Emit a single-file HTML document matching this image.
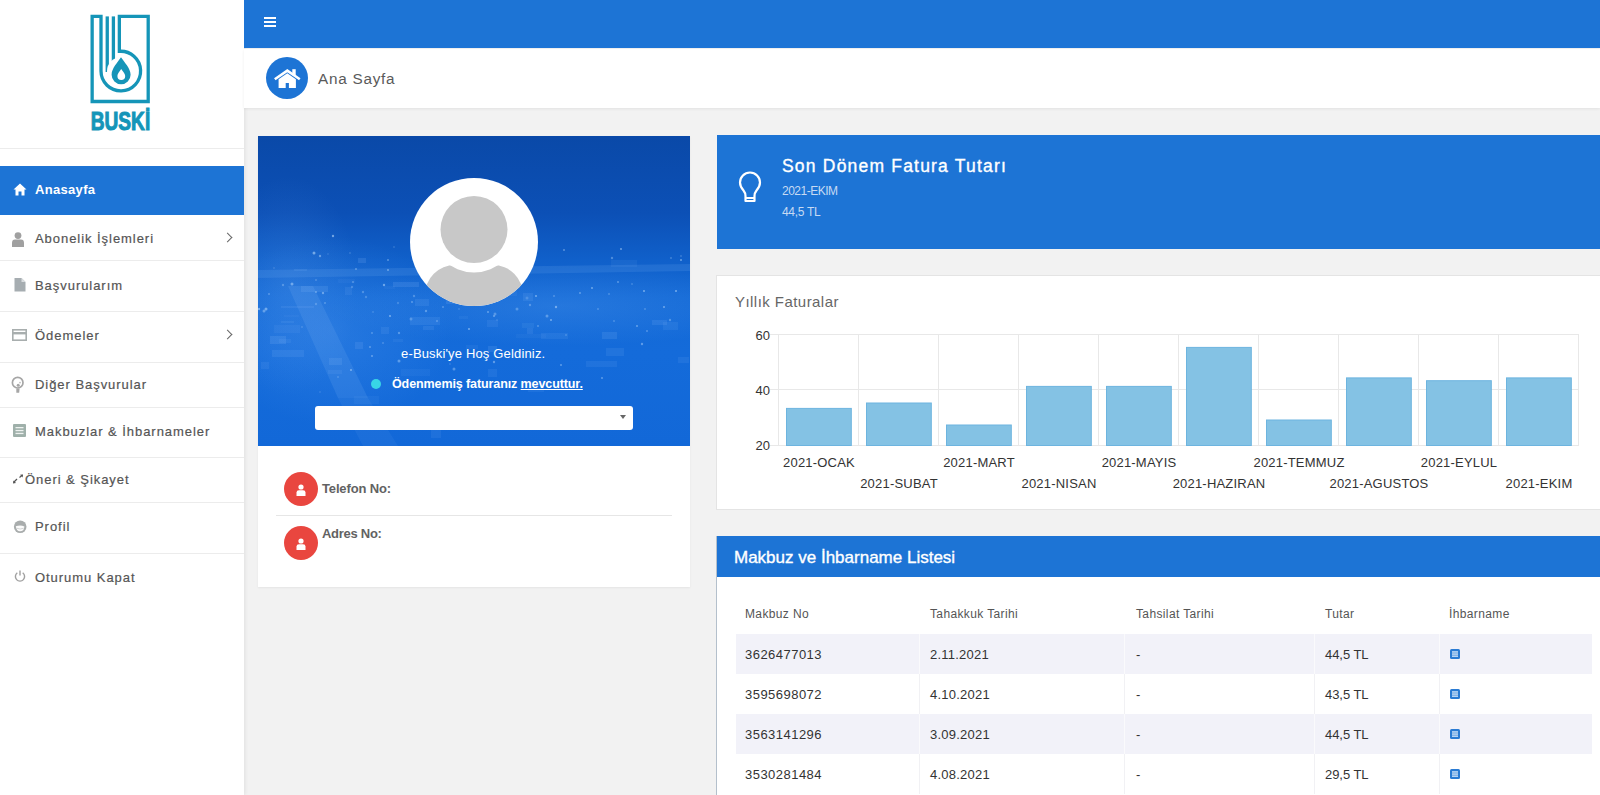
<!DOCTYPE html>
<html><head><meta charset="utf-8">
<style>
*{margin:0;padding:0;box-sizing:border-box}
html,body{width:1600px;height:795px;overflow:hidden}
body{background:#f2f2f2;font-family:"Liberation Sans",sans-serif;position:relative;color:#333}
.abs{position:absolute}
#sidebar{position:absolute;left:0;top:0;width:244px;height:795px;background:#fff;box-shadow:1px 0 4px rgba(0,0,0,.08)}
.sep{position:absolute;left:0;width:244px;height:1px;background:#ececec}
.mi{position:absolute;left:35px;font-size:13px;letter-spacing:0.95px;color:#555;white-space:nowrap;-webkit-text-stroke:0.2px #555}
.chev{position:absolute;left:224px;width:7px;height:7px;border-right:1.3px solid #666;border-top:1.3px solid #666;transform:rotate(45deg)}
#topbar{position:absolute;left:244px;top:0;width:1356px;height:48px;background:#1d74d5}
#crumb{position:absolute;left:244px;top:49px;width:1356px;height:59px;background:#fff;box-shadow:0 1px 3px rgba(0,0,0,.07)}
.card{position:absolute;background:#fff}
.th{position:absolute;top:607px;font-size:12px;color:#555;white-space:nowrap;letter-spacing:0.37px}
.td{position:absolute;font-size:13px;color:#333;white-space:nowrap;letter-spacing:0.47px}
</style></head><body>

<div id="sidebar">
  <svg class="abs" style="left:85px;top:10px" width="70" height="122" viewBox="0 0 70 122">
    <g fill="none" stroke="#1595b8" stroke-width="3.3">
      <path d="M16 6.4 H7.15 V91.5 H63.2 V6.4 H34.35 V41.3 A19.8 19.8 0 1 1 16 61.05 Z" stroke-linejoin="miter"/>
      <path d="M22.25 6.4 V62"/>
      <path d="M28.4 6.4 V62"/>
    </g>
    <circle cx="35.8" cy="61.05" r="13.8" fill="#fff"/>
    <path d="M36 47.2 C33 52 26.6 58 26.6 64.8 A9.5 9.5 0 0 0 45.6 64.8 C45.6 58 39 52 36 47.2 Z" fill="#1595b8"/>
    <path d="M36.2 59 C34.7 61.5 32.4 63.5 32.4 66 A3.9 3.9 0 0 0 40.2 66 C40.2 63.5 37.7 61.5 36.2 59 Z" fill="#fff"/>
    <text x="5.8" y="120.2" font-family="Liberation Sans" font-weight="bold" font-size="26" textLength="59.4" lengthAdjust="spacingAndGlyphs" fill="#1595b8" stroke="#1595b8" stroke-width="1.1">BUSKİ</text>
  </svg>
  <div class="sep" style="top:148px"></div>
  <div class="abs" style="left:0;top:166px;width:244px;height:49px;background:#1d74d5"></div>
  <svg class="abs" style="left:13px;top:183px" width="14" height="13" viewBox="0 0 14 13"><path d="M7 0.5 L0.5 6.5 H2.5 V12.5 H5.5 V8.5 H8.5 V12.5 H11.5 V6.5 H13.5 Z" fill="#fff"/></svg>
  <div class="mi" style="top:182px;color:#fff;font-weight:bold;letter-spacing:0.32px;-webkit-text-stroke:0">Anasayfa</div>

  <svg class="abs" style="left:12px;top:232px" width="12" height="15" viewBox="0 0 12 15"><circle cx="6" cy="3.6" r="3.4" fill="#a0a0a0"/><path d="M0 15 V11 Q0 7.6 3 7.6 H9 Q12 7.6 12 11 V15 Z" fill="#a0a0a0"/></svg>
  <div class="mi" style="top:231px">Abonelik İşlemleri</div>
  <div class="chev" style="top:234px"></div>
  <div class="sep" style="top:260px"></div>

  <svg class="abs" style="left:14px;top:278px" width="12" height="14" viewBox="0 0 12 14"><path d="M0.5 0 H7.5 L11.5 4 V13.5 H0.5 Z" fill="#a6adb1"/><path d="M7.5 0 V4 H11.5" fill="#d9dde0"/></svg>
  <div class="mi" style="top:278px">Başvurularım</div>
  <div class="sep" style="top:311px"></div>

  <svg class="abs" style="left:12px;top:329px" width="15" height="12" viewBox="0 0 15 12"><rect x="0.8" y="0.8" width="13.4" height="10.4" fill="none" stroke="#a8aeae" stroke-width="1.6"/><rect x="0.8" y="3" width="13.4" height="2.4" fill="#a8aeae"/></svg>
  <div class="mi" style="top:328px">Ödemeler</div>
  <div class="chev" style="top:331px"></div>
  <div class="sep" style="top:362px"></div>

  <svg class="abs" style="left:10px;top:375px" width="16" height="19" viewBox="0 0 16 19"><circle cx="7.7" cy="7.7" r="5.3" fill="none" stroke="#a6a6a6" stroke-width="1.7"/><circle cx="8.2" cy="10.2" r="1.5" fill="#a6a6a6"/><circle cx="10" cy="7.6" r="0.9" fill="#bdbdbd"/><path d="M6.3 13.5 H9.6 L9.2 17.8 H6.3 Z" fill="#a6a6a6"/></svg>
  <div class="mi" style="top:377px">Diğer Başvurular</div>
  <div class="sep" style="top:407px"></div>

  <svg class="abs" style="left:13px;top:424px" width="13" height="13" viewBox="0 0 13 13"><rect x="0" y="0" width="13" height="13" rx="1" fill="#9fb0aa"/><rect x="2.5" y="3" width="8" height="1.3" fill="#eef2f0"/><rect x="2.5" y="5.9" width="8" height="1.3" fill="#eef2f0"/><rect x="2.5" y="8.8" width="8" height="1.3" fill="#eef2f0"/></svg>
  <div class="mi" style="top:424px">Makbuzlar &amp; İhbarnameler</div>
  <div class="sep" style="top:457px"></div>

  <svg class="abs" style="left:12px;top:474px" width="12" height="10" viewBox="0 0 12 10"><path d="M1.5 8.5 L5 5" stroke="#555" stroke-width="1.2"/><path d="M1 9.5 L1.5 6.5 L4 9 Z" fill="#555"/><path d="M7.5 3.5 L10.5 1" stroke="#555" stroke-width="1.2"/><path d="M11 0.5 L8 0.8 L10.6 3.4 Z" fill="#555"/></svg>
  <div class="mi" style="top:472px;left:25px">Öneri &amp; Şikayet</div>
  <div class="sep" style="top:502px"></div>

  <svg class="abs" style="left:13px;top:520px" width="14" height="14" viewBox="0 0 14 14"><circle cx="7.2" cy="6.8" r="6.3" fill="#a9adad"/><path d="M2.8 6.2 Q7.5 4.6 11.4 6.4 Q11 11.2 7 11.3 Q3.4 11.2 2.8 6.2 Z" fill="#fbfbfb"/><path d="M3.5 8.2 Q7.2 9.8 10.8 8.2" stroke="#c9cccc" stroke-width="0.8" fill="none"/></svg>
  <div class="mi" style="top:519px">Profil</div>
  <div class="sep" style="top:553px"></div>

  <svg class="abs" style="left:14px;top:570px" width="12" height="12" viewBox="0 0 12 12"><path d="M3.3 2.8 A4.6 4.6 0 1 0 8.7 2.8" fill="none" stroke="#a0a0a0" stroke-width="1.4"/><path d="M6 0.5 V5.5" stroke="#a0a0a0" stroke-width="1.4"/></svg>
  <div class="mi" style="top:570px">Oturumu Kapat</div>
</div>

<div id="topbar"></div>
<div class="abs" style="left:264px;top:17px;width:12px;height:2px;background:#fff"></div>
<div class="abs" style="left:264px;top:21px;width:12px;height:2px;background:#fff"></div>
<div class="abs" style="left:264px;top:25px;width:12px;height:2px;background:#fff"></div>
<div id="crumb"></div>
<div class="abs" style="left:266px;top:57px;width:42px;height:42px;border-radius:50%;background:#1d74d5"></div>
<svg class="abs" style="left:270px;top:62px" width="35" height="32" viewBox="0 0 35 32"><path d="M4.8 17.2 L17.3 8.6 L29.8 17.2" stroke="#fff" stroke-width="2.6" fill="none" stroke-linejoin="miter"/><rect x="22.3" y="7.2" width="3.4" height="6" fill="#fff"/><path d="M8.6 17.2 L17.3 11.2 L25.9 17.2 V26 H18.9 V21 H15.7 V26 H8.6 Z" fill="#fff"/></svg>
<div class="abs" style="left:318px;top:70px;font-size:15.3px;color:#5a5a5a;letter-spacing:0.75px;white-space:nowrap">Ana Sayfa</div>

<!-- profile card -->
<div class="card" style="left:258px;top:136px;width:432px;height:451px;box-shadow:0 1px 2px rgba(0,0,0,.06)"></div>
<div class="abs" id="pbg" style="left:258px;top:136px;width:432px;height:310px;overflow:hidden;background:
radial-gradient(ellipse 120px 95px at 75px 195px, rgba(110,175,250,.2), rgba(110,175,250,0) 100%),
radial-gradient(ellipse 230px 40px at 300px 170px, rgba(110,175,248,.2), rgba(110,175,248,0) 100%),
radial-gradient(ellipse 70px 110px at 30px 150px, rgba(110,170,245,.18), rgba(110,170,245,0) 100%),
linear-gradient(180deg,#0a49a8 0%,#0c50b6 25%,#1060ca 40%,#1369d6 52%,#146bda 70%,#1268d8 100%)">
<svg width="432" height="310" style="position:absolute;left:0;top:0">
<path d="M30 150 L55 150 L110 262 L80 262 Z" fill="#8cc0f8" fill-opacity="0.14"/>
<path d="M80 262 L110 262 L140 310 L105 310 Z" fill="#8cc0f8" fill-opacity="0.08"/>
<path d="M0 134 L432 128 L432 135 L0 142 Z" fill="#7ab4f4" fill-opacity="0.16"/>
<circle cx="269" cy="162" r="1.5" fill="#c4e2ff" fill-opacity="0.21"/>
<circle cx="201" cy="103" r="1" fill="#c4e2ff" fill-opacity="0.43"/>
<circle cx="389" cy="195" r="1" fill="#c4e2ff" fill-opacity="0.33"/>
<circle cx="44" cy="191" r="1" fill="#c4e2ff" fill-opacity="0.20"/>
<circle cx="94" cy="151" r="1.2" fill="#c4e2ff" fill-opacity="0.26"/>
<circle cx="344" cy="242" r="1" fill="#c4e2ff" fill-opacity="0.42"/>
<circle cx="192" cy="228" r="0.8" fill="#c4e2ff" fill-opacity="0.27"/>
<circle cx="93" cy="234" r="1" fill="#c4e2ff" fill-opacity="0.51"/>
<circle cx="125" cy="207" r="1" fill="#c4e2ff" fill-opacity="0.26"/>
<circle cx="418" cy="155" r="1" fill="#c4e2ff" fill-opacity="0.54"/>
<circle cx="386" cy="155" r="1" fill="#c4e2ff" fill-opacity="0.53"/>
<circle cx="114" cy="197" r="1" fill="#c4e2ff" fill-opacity="0.31"/>
<circle cx="261" cy="218" r="1" fill="#c4e2ff" fill-opacity="0.22"/>
<circle cx="154" cy="166" r="1" fill="#c4e2ff" fill-opacity="0.37"/>
<circle cx="136" cy="111" r="0.8" fill="#c4e2ff" fill-opacity="0.29"/>
<circle cx="406" cy="171" r="1" fill="#c4e2ff" fill-opacity="0.50"/>
<circle cx="8" cy="173" r="1.5" fill="#c4e2ff" fill-opacity="0.49"/>
<circle cx="196" cy="133" r="1" fill="#c4e2ff" fill-opacity="0.42"/>
<circle cx="412" cy="184" r="1.2" fill="#c4e2ff" fill-opacity="0.32"/>
<circle cx="153" cy="183" r="1.5" fill="#c4e2ff" fill-opacity="0.29"/>
<circle cx="200" cy="113" r="1" fill="#c4e2ff" fill-opacity="0.50"/>
<circle cx="16" cy="132" r="0.8" fill="#c4e2ff" fill-opacity="0.27"/>
<circle cx="222" cy="152" r="1" fill="#c4e2ff" fill-opacity="0.52"/>
<circle cx="236" cy="180" r="1" fill="#c4e2ff" fill-opacity="0.44"/>
<circle cx="132" cy="180" r="1" fill="#c4e2ff" fill-opacity="0.55"/>
<circle cx="70" cy="118" r="0.8" fill="#c4e2ff" fill-opacity="0.23"/>
<circle cx="259" cy="173" r="1.5" fill="#c4e2ff" fill-opacity="0.32"/>
<circle cx="108" cy="161" r="1.2" fill="#c4e2ff" fill-opacity="0.25"/>
<circle cx="423" cy="124" r="1" fill="#c4e2ff" fill-opacity="0.49"/>
<circle cx="56" cy="117" r="1.5" fill="#c4e2ff" fill-opacity="0.53"/>
<circle cx="272" cy="169" r="1.2" fill="#c4e2ff" fill-opacity="0.33"/>
<circle cx="25" cy="149" r="1.2" fill="#c4e2ff" fill-opacity="0.30"/>
<circle cx="196" cy="233" r="1.5" fill="#c4e2ff" fill-opacity="0.36"/>
<circle cx="211" cy="165" r="1" fill="#c4e2ff" fill-opacity="0.37"/>
<circle cx="126" cy="149" r="1.2" fill="#c4e2ff" fill-opacity="0.49"/>
<circle cx="230" cy="176" r="1" fill="#c4e2ff" fill-opacity="0.42"/>
<circle cx="216" cy="157" r="1" fill="#c4e2ff" fill-opacity="0.38"/>
<circle cx="237" cy="178" r="1.5" fill="#c4e2ff" fill-opacity="0.33"/>
<circle cx="340" cy="173" r="0.8" fill="#c4e2ff" fill-opacity="0.47"/>
<circle cx="157" cy="112" r="1" fill="#c4e2ff" fill-opacity="0.49"/>
<circle cx="114" cy="220" r="1" fill="#c4e2ff" fill-opacity="0.43"/>
<circle cx="251" cy="158" r="0.8" fill="#c4e2ff" fill-opacity="0.37"/>
<circle cx="334" cy="152" r="1" fill="#c4e2ff" fill-opacity="0.49"/>
<circle cx="280" cy="190" r="1" fill="#c4e2ff" fill-opacity="0.32"/>
<circle cx="278" cy="160" r="1" fill="#c4e2ff" fill-opacity="0.52"/>
<circle cx="75" cy="100" r="1.2" fill="#c4e2ff" fill-opacity="0.54"/>
<circle cx="413" cy="122" r="1" fill="#c4e2ff" fill-opacity="0.27"/>
<circle cx="156" cy="160" r="1.2" fill="#c4e2ff" fill-opacity="0.30"/>
<circle cx="34" cy="148" r="1.5" fill="#c4e2ff" fill-opacity="0.47"/>
<circle cx="251" cy="133" r="1.2" fill="#c4e2ff" fill-opacity="0.31"/>
<circle cx="239" cy="184" r="0.8" fill="#c4e2ff" fill-opacity="0.27"/>
<circle cx="253" cy="144" r="1.5" fill="#c4e2ff" fill-opacity="0.43"/>
<circle cx="95" cy="146" r="0.8" fill="#c4e2ff" fill-opacity="0.55"/>
<circle cx="423" cy="120" r="1" fill="#c4e2ff" fill-opacity="0.22"/>
<circle cx="58" cy="156" r="1" fill="#c4e2ff" fill-opacity="0.39"/>
<circle cx="179" cy="185" r="1" fill="#c4e2ff" fill-opacity="0.33"/>
<circle cx="264" cy="143" r="1" fill="#c4e2ff" fill-opacity="0.20"/>
<circle cx="175" cy="151" r="1" fill="#c4e2ff" fill-opacity="0.50"/>
<circle cx="374" cy="148" r="0.8" fill="#c4e2ff" fill-opacity="0.39"/>
<circle cx="130" cy="124" r="1" fill="#c4e2ff" fill-opacity="0.39"/>
<circle cx="354" cy="122" r="1.2" fill="#c4e2ff" fill-opacity="0.34"/>
<circle cx="244" cy="127" r="1" fill="#c4e2ff" fill-opacity="0.41"/>
<circle cx="244" cy="156" r="1" fill="#c4e2ff" fill-opacity="0.54"/>
<circle cx="263" cy="121" r="0.8" fill="#c4e2ff" fill-opacity="0.33"/>
<circle cx="141" cy="225" r="1.5" fill="#c4e2ff" fill-opacity="0.39"/>
<circle cx="141" cy="197" r="1.2" fill="#c4e2ff" fill-opacity="0.35"/>
<circle cx="98" cy="133" r="1" fill="#c4e2ff" fill-opacity="0.37"/>
<circle cx="306" cy="114" r="1" fill="#c4e2ff" fill-opacity="0.41"/>
<circle cx="112" cy="211" r="1" fill="#c4e2ff" fill-opacity="0.37"/>
<circle cx="179" cy="123" r="1.2" fill="#c4e2ff" fill-opacity="0.53"/>
<circle cx="62" cy="256" r="0.8" fill="#c4e2ff" fill-opacity="0.24"/>
<circle cx="269" cy="138" r="1" fill="#c4e2ff" fill-opacity="0.49"/>
<circle cx="6" cy="175" r="1.5" fill="#c4e2ff" fill-opacity="0.40"/>
<circle cx="105" cy="156" r="1.2" fill="#c4e2ff" fill-opacity="0.29"/>
<circle cx="67" cy="167" r="1" fill="#c4e2ff" fill-opacity="0.30"/>
<circle cx="263" cy="115" r="1.5" fill="#c4e2ff" fill-opacity="0.51"/>
<circle cx="387" cy="173" r="0.8" fill="#c4e2ff" fill-opacity="0.47"/>
<circle cx="130" cy="134" r="1" fill="#c4e2ff" fill-opacity="0.46"/>
<circle cx="11" cy="158" r="1" fill="#c4e2ff" fill-opacity="0.33"/>
<circle cx="322" cy="157" r="1" fill="#c4e2ff" fill-opacity="0.39"/>
<circle cx="296" cy="160" r="0.8" fill="#c4e2ff" fill-opacity="0.51"/>
<circle cx="236" cy="226" r="1.2" fill="#c4e2ff" fill-opacity="0.41"/>
<circle cx="298" cy="171" r="1.2" fill="#c4e2ff" fill-opacity="0.50"/>
<circle cx="363" cy="113" r="1" fill="#c4e2ff" fill-opacity="0.51"/>
<circle cx="201" cy="173" r="0.8" fill="#c4e2ff" fill-opacity="0.31"/>
<circle cx="1" cy="173" r="1.2" fill="#c4e2ff" fill-opacity="0.52"/>
<circle cx="62" cy="120" r="1.2" fill="#c4e2ff" fill-opacity="0.44"/>
<circle cx="384" cy="208" r="1.2" fill="#c4e2ff" fill-opacity="0.41"/>
<circle cx="351" cy="158" r="0.8" fill="#c4e2ff" fill-opacity="0.46"/>
<circle cx="115" cy="176" r="0.8" fill="#c4e2ff" fill-opacity="0.32"/>
<circle cx="185" cy="171" r="0.8" fill="#c4e2ff" fill-opacity="0.55"/>
<circle cx="303" cy="229" r="1" fill="#c4e2ff" fill-opacity="0.42"/>
<circle cx="356" cy="185" r="0.8" fill="#c4e2ff" fill-opacity="0.45"/>
<circle cx="58" cy="144" r="1" fill="#c4e2ff" fill-opacity="0.26"/>
<circle cx="80" cy="241" r="1" fill="#c4e2ff" fill-opacity="0.22"/>
<circle cx="92" cy="117" r="0.8" fill="#c4e2ff" fill-opacity="0.30"/>
<circle cx="247" cy="147" r="0.8" fill="#c4e2ff" fill-opacity="0.46"/>
<circle cx="379" cy="190" r="1" fill="#c4e2ff" fill-opacity="0.44"/>
<circle cx="211" cy="193" r="1" fill="#c4e2ff" fill-opacity="0.53"/>
<circle cx="162" cy="216" r="1" fill="#c4e2ff" fill-opacity="0.40"/>
<circle cx="293" cy="184" r="1" fill="#c4e2ff" fill-opacity="0.52"/>
<circle cx="240" cy="145" r="1.5" fill="#c4e2ff" fill-opacity="0.28"/>
<circle cx="360" cy="146" r="1" fill="#c4e2ff" fill-opacity="0.38"/>
<circle cx="58" cy="168" r="1.2" fill="#c4e2ff" fill-opacity="0.26"/>
<circle cx="308" cy="199" r="1" fill="#c4e2ff" fill-opacity="0.23"/>
<circle cx="289" cy="180" r="1.5" fill="#c4e2ff" fill-opacity="0.36"/>
<circle cx="168" cy="175" r="1.2" fill="#c4e2ff" fill-opacity="0.37"/>
<circle cx="140" cy="167" r="1.2" fill="#c4e2ff" fill-opacity="0.22"/>
<circle cx="65" cy="157" r="1.2" fill="#c4e2ff" fill-opacity="0.44"/>
<rect x="96" y="260" width="25" height="8" fill="#9cc8ff" fill-opacity="0.06"/>
<rect x="270" y="252" width="16" height="4" fill="#9cc8ff" fill-opacity="0.08"/>
<rect x="265" y="157" width="10" height="8" fill="#9cc8ff" fill-opacity="0.11"/>
<rect x="348" y="212" width="18" height="8" fill="#9cc8ff" fill-opacity="0.10"/>
<rect x="256" y="121" width="17" height="3" fill="#9cc8ff" fill-opacity="0.05"/>
<rect x="87" y="151" width="7" height="8" fill="#9cc8ff" fill-opacity="0.09"/>
<rect x="328" y="225" width="31" height="6" fill="#9cc8ff" fill-opacity="0.09"/>
<rect x="201" y="180" width="9" height="3" fill="#9cc8ff" fill-opacity="0.06"/>
<rect x="162" y="118" width="10" height="4" fill="#9cc8ff" fill-opacity="0.07"/>
<rect x="70" y="234" width="14" height="4" fill="#9cc8ff" fill-opacity="0.09"/>
<rect x="14" y="214" width="32" height="7" fill="#9cc8ff" fill-opacity="0.11"/>
<rect x="204" y="162" width="32" height="3" fill="#9cc8ff" fill-opacity="0.11"/>
<rect x="126" y="150" width="11" height="3" fill="#9cc8ff" fill-opacity="0.05"/>
<rect x="100" y="122" width="8" height="5" fill="#9cc8ff" fill-opacity="0.14"/>
<rect x="157" y="163" width="14" height="7" fill="#9cc8ff" fill-opacity="0.11"/>
<rect x="71" y="222" width="13" height="7" fill="#9cc8ff" fill-opacity="0.13"/>
<rect x="3" y="226" width="8" height="7" fill="#9cc8ff" fill-opacity="0.09"/>
<rect x="224" y="144" width="16" height="3" fill="#9cc8ff" fill-opacity="0.06"/>
<rect x="23" y="185" width="13" height="2" fill="#9cc8ff" fill-opacity="0.09"/>
<rect x="26" y="179" width="15" height="2" fill="#9cc8ff" fill-opacity="0.05"/>
<rect x="420" y="221" width="11" height="6" fill="#9cc8ff" fill-opacity="0.09"/>
<rect x="230" y="210" width="9" height="6" fill="#9cc8ff" fill-opacity="0.13"/>
<rect x="258" y="198" width="30" height="4" fill="#9cc8ff" fill-opacity="0.05"/>
<rect x="233" y="128" width="17" height="6" fill="#9cc8ff" fill-opacity="0.12"/>
<rect x="394" y="184" width="15" height="5" fill="#9cc8ff" fill-opacity="0.12"/>
<rect x="97" y="206" width="8" height="7" fill="#9cc8ff" fill-opacity="0.12"/>
<rect x="135" y="203" width="10" height="3" fill="#9cc8ff" fill-opacity="0.07"/>
<rect x="36" y="133" width="13" height="2" fill="#9cc8ff" fill-opacity="0.11"/>
<rect x="21" y="203" width="12" height="4" fill="#9cc8ff" fill-opacity="0.08"/>
<rect x="43" y="150" width="27" height="6" fill="#9cc8ff" fill-opacity="0.13"/>
<rect x="283" y="197" width="27" height="6" fill="#9cc8ff" fill-opacity="0.09"/>
<rect x="353" y="124" width="26" height="7" fill="#9cc8ff" fill-opacity="0.07"/>
<rect x="165" y="190" width="11" height="4" fill="#9cc8ff" fill-opacity="0.11"/>
<rect x="123" y="191" width="8" height="7" fill="#9cc8ff" fill-opacity="0.10"/>
<rect x="12" y="200" width="16" height="8" fill="#9cc8ff" fill-opacity="0.14"/>
<rect x="264" y="187" width="12" height="5" fill="#9cc8ff" fill-opacity="0.08"/>
<rect x="143" y="233" width="29" height="7" fill="#9cc8ff" fill-opacity="0.06"/>
<rect x="229" y="184" width="11" height="7" fill="#9cc8ff" fill-opacity="0.09"/>
<rect x="405" y="186" width="15" height="8" fill="#9cc8ff" fill-opacity="0.09"/>
<rect x="188" y="161" width="18" height="7" fill="#9cc8ff" fill-opacity="0.13"/>
<rect x="230" y="233" width="9" height="8" fill="#9cc8ff" fill-opacity="0.09"/>
<rect x="23" y="170" width="33" height="2" fill="#9cc8ff" fill-opacity="0.10"/>
<rect x="208" y="209" width="12" height="4" fill="#9cc8ff" fill-opacity="0.07"/>
<rect x="243" y="153" width="16" height="7" fill="#9cc8ff" fill-opacity="0.07"/>
<rect x="152" y="181" width="30" height="8" fill="#9cc8ff" fill-opacity="0.11"/>
<rect x="173" y="294" width="10" height="8" fill="#9cc8ff" fill-opacity="0.09"/>
<rect x="16" y="189" width="26" height="8" fill="#9cc8ff" fill-opacity="0.07"/>
<rect x="344" y="196" width="15" height="7" fill="#9cc8ff" fill-opacity="0.13"/>
<rect x="269" y="192" width="6" height="6" fill="#9cc8ff" fill-opacity="0.10"/>
<rect x="80" y="143" width="17" height="4" fill="#9cc8ff" fill-opacity="0.05"/>
<rect x="135" y="146" width="26" height="5" fill="#9cc8ff" fill-opacity="0.14"/>
</svg></div>
<svg class="abs" style="left:410px;top:178px" width="128" height="128" viewBox="0 0 128 128"><defs><clipPath id="av"><circle cx="64" cy="64" r="64"/></clipPath></defs><circle cx="64" cy="64" r="64" fill="#fff"/><g clip-path="url(#av)"><rect x="15" y="87" width="98" height="60" rx="30" fill="#c8c8c8"/><circle cx="64" cy="51.5" r="43" fill="#fff"/><circle cx="64" cy="51.5" r="33.5" fill="#c8c8c8"/></g></svg>
<div class="abs" style="left:401px;top:346px;font-size:13px;color:#fff;white-space:nowrap;letter-spacing:0.16px">e-Buski'ye Hoş Geldiniz.</div>
<div class="abs" style="left:371px;top:379px;width:10px;height:10px;border-radius:50%;background:#38d6e6"></div>
<div class="abs" style="left:392px;top:375px;font-size:13px;color:#fff;white-space:nowrap;font-weight:bold;letter-spacing:-0.1px;font-size:12.5px;margin-top:1.5px">Ödenmemiş faturanız <span style="text-decoration:underline">mevcuttur.</span></div>
<div class="abs" style="left:315px;top:406px;width:318px;height:24px;background:#fff;border-radius:3px"></div>
<div class="abs" style="left:620px;top:415px;width:0;height:0;border-left:3.5px solid transparent;border-right:3.5px solid transparent;border-top:4px solid #666"></div>

<div class="abs" style="left:284px;top:472px;width:34px;height:34px;border-radius:50%;background:#e9463f"></div>
<svg class="abs" style="left:296px;top:484px" width="10" height="12" viewBox="0 0 10 12"><circle cx="5" cy="3" r="2.6" fill="#fff"/><path d="M0.5 12 V8.5 Q0.5 6.2 3 6.2 H7 Q9.5 6.2 9.5 8.5 V12 Z" fill="#fff"/></svg>
<div class="abs" style="left:322px;top:481px;font-size:13px;font-weight:bold;color:#626262;white-space:nowrap;letter-spacing:-0.15px">Telefon No:</div>
<div class="abs" style="left:276px;top:515px;width:396px;height:1px;background:#e6e6e6"></div>
<div class="abs" style="left:284px;top:526px;width:34px;height:34px;border-radius:50%;background:#e9463f"></div>
<svg class="abs" style="left:296px;top:538px" width="10" height="12" viewBox="0 0 10 12"><circle cx="5" cy="3" r="2.6" fill="#fff"/><path d="M0.5 12 V8.5 Q0.5 6.2 3 6.2 H7 Q9.5 6.2 9.5 8.5 V12 Z" fill="#fff"/></svg>
<div class="abs" style="left:322px;top:526px;font-size:13px;font-weight:bold;color:#626262;white-space:nowrap;letter-spacing:-0.28px">Adres No:</div>

<!-- son donem -->
<div class="abs" style="left:717px;top:135px;width:883px;height:114px;background:#1d74d5"></div>
<svg class="abs" style="left:737px;top:170px" width="26" height="36" viewBox="0 0 26 36"><path d="M8.5 31 V26 Q8.5 23 6.5 20.5 Q3 16.5 3 12.5 A10 10 0 0 1 23 12.5 Q23 16.5 19.5 20.5 Q17.5 23 17.5 26 V31 Z" fill="none" stroke="#fff" stroke-width="2.2" stroke-linejoin="round"/><path d="M9 28 H17" stroke="#fff" stroke-width="2"/></svg>
<div class="abs" style="left:782px;top:156px;font-size:17.5px;color:#fff;white-space:nowrap;letter-spacing:1.2px;-webkit-text-stroke:0.35px #fff">Son Dönem Fatura Tutarı</div>
<div class="abs" style="left:782px;top:184px;font-size:12px;color:#c6daf3;white-space:nowrap;letter-spacing:-0.5px">2021-EKIM</div>
<div class="abs" style="left:782px;top:205px;font-size:12px;color:#c6daf3;white-space:nowrap;letter-spacing:-0.3px">44,5 TL</div>

<!-- chart card -->
<div class="card" style="left:716px;top:275px;width:900px;height:235px;border:1px solid #e4e4e4"></div>
<div class="abs" style="left:735px;top:293px;font-size:15px;color:#666;white-space:nowrap;letter-spacing:0.45px">Yıllık Faturalar</div>
<svg class="abs" style="left:716px;top:275px" width="884" height="235" viewBox="716 275 884 235" id="chart">
<line x1="778.5" y1="334" x2="778.5" y2="446" stroke="#e8e8e8" stroke-width="1"/>
<line x1="858.5" y1="334" x2="858.5" y2="446" stroke="#e8e8e8" stroke-width="1"/>
<line x1="938.5" y1="334" x2="938.5" y2="446" stroke="#e8e8e8" stroke-width="1"/>
<line x1="1018.5" y1="334" x2="1018.5" y2="446" stroke="#e8e8e8" stroke-width="1"/>
<line x1="1098.5" y1="334" x2="1098.5" y2="446" stroke="#e8e8e8" stroke-width="1"/>
<line x1="1178.5" y1="334" x2="1178.5" y2="446" stroke="#e8e8e8" stroke-width="1"/>
<line x1="1258.5" y1="334" x2="1258.5" y2="446" stroke="#e8e8e8" stroke-width="1"/>
<line x1="1338.5" y1="334" x2="1338.5" y2="446" stroke="#e8e8e8" stroke-width="1"/>
<line x1="1418.5" y1="334" x2="1418.5" y2="446" stroke="#e8e8e8" stroke-width="1"/>
<line x1="1498.5" y1="334" x2="1498.5" y2="446" stroke="#e8e8e8" stroke-width="1"/>
<line x1="1578.5" y1="334" x2="1578.5" y2="446" stroke="#e8e8e8" stroke-width="1"/>
<line x1="770" y1="334.5" x2="1578" y2="334.5" stroke="#e8e8e8" stroke-width="1"/>
<line x1="770" y1="389.5" x2="1578" y2="389.5" stroke="#e8e8e8" stroke-width="1"/>
<line x1="770" y1="445.5" x2="1578" y2="445.5" stroke="#e8e8e8" stroke-width="1"/>
<rect x="786.5" y="408.4" width="64.8" height="37.1" fill="#84c2e4" stroke="#6db4df" stroke-width="1"/>
<rect x="866.5" y="403" width="64.8" height="42.5" fill="#84c2e4" stroke="#6db4df" stroke-width="1"/>
<rect x="946.5" y="425" width="64.8" height="20.5" fill="#84c2e4" stroke="#6db4df" stroke-width="1"/>
<rect x="1026.5" y="386.4" width="64.8" height="59.1" fill="#84c2e4" stroke="#6db4df" stroke-width="1"/>
<rect x="1106.5" y="386.4" width="64.8" height="59.1" fill="#84c2e4" stroke="#6db4df" stroke-width="1"/>
<rect x="1186.5" y="347.4" width="64.8" height="98.1" fill="#84c2e4" stroke="#6db4df" stroke-width="1"/>
<rect x="1266.5" y="420" width="64.8" height="25.5" fill="#84c2e4" stroke="#6db4df" stroke-width="1"/>
<rect x="1346.5" y="377.9" width="64.8" height="67.6" fill="#84c2e4" stroke="#6db4df" stroke-width="1"/>
<rect x="1426.5" y="380.7" width="64.8" height="64.8" fill="#84c2e4" stroke="#6db4df" stroke-width="1"/>
<rect x="1506.5" y="377.9" width="64.8" height="67.6" fill="#84c2e4" stroke="#6db4df" stroke-width="1"/>
<text x="770" y="339.8" text-anchor="end" font-family="Liberation Sans" font-size="13" fill="#333">60</text>
<text x="770" y="394.8" text-anchor="end" font-family="Liberation Sans" font-size="13" fill="#333">40</text>
<text x="770" y="449.9" text-anchor="end" font-family="Liberation Sans" font-size="13" fill="#333">20</text>
<text x="819" y="466.6" text-anchor="middle" font-family="Liberation Sans" font-size="13" fill="#333" letter-spacing="0.2">2021-OCAK</text>
<text x="899" y="488.3" text-anchor="middle" font-family="Liberation Sans" font-size="13" fill="#333" letter-spacing="0.2">2021-SUBAT</text>
<text x="979" y="466.6" text-anchor="middle" font-family="Liberation Sans" font-size="13" fill="#333" letter-spacing="0.2">2021-MART</text>
<text x="1059" y="488.3" text-anchor="middle" font-family="Liberation Sans" font-size="13" fill="#333" letter-spacing="0.2">2021-NISAN</text>
<text x="1139" y="466.6" text-anchor="middle" font-family="Liberation Sans" font-size="13" fill="#333" letter-spacing="0.2">2021-MAYIS</text>
<text x="1219" y="488.3" text-anchor="middle" font-family="Liberation Sans" font-size="13" fill="#333" letter-spacing="0.2">2021-HAZIRAN</text>
<text x="1299" y="466.6" text-anchor="middle" font-family="Liberation Sans" font-size="13" fill="#333" letter-spacing="0.2">2021-TEMMUZ</text>
<text x="1379" y="488.3" text-anchor="middle" font-family="Liberation Sans" font-size="13" fill="#333" letter-spacing="0.2">2021-AGUSTOS</text>
<text x="1459" y="466.6" text-anchor="middle" font-family="Liberation Sans" font-size="13" fill="#333" letter-spacing="0.2">2021-EYLUL</text>
<text x="1539" y="488.3" text-anchor="middle" font-family="Liberation Sans" font-size="13" fill="#333" letter-spacing="0.2">2021-EKIM</text>
</svg>

<!-- table card -->
<div class="card" style="left:716px;top:536px;width:884px;height:259px;border-left:1px solid #b4c0cc"></div>
<div class="abs" style="left:717px;top:536px;width:883px;height:41px;background:#1d74d5"></div>
<div class="abs" style="left:734px;top:548px;font-size:17px;color:#fff;white-space:nowrap;-webkit-text-stroke:0.35px #fff">Makbuz ve İhbarname Listesi</div>
<div class="th" style="left:745px">Makbuz No</div>
<div class="th" style="left:930px">Tahakkuk Tarihi</div>
<div class="th" style="left:1136px">Tahsilat Tarihi</div>
<div class="th" style="left:1325px">Tutar</div>
<div class="th" style="left:1449px">İhbarname</div>
<div class="abs" style="left:736px;top:634px;width:856px;height:40px;background:#f2f2f9"></div>
<div class="abs" style="left:919px;top:634px;width:1px;height:40px;background:#fafafc"></div>
<div class="abs" style="left:1124px;top:634px;width:1px;height:40px;background:#fafafc"></div>
<div class="abs" style="left:1314px;top:634px;width:1px;height:40px;background:#fafafc"></div>
<div class="abs" style="left:1439px;top:634px;width:1px;height:40px;background:#fafafc"></div>
<div class="td" style="left:745px;top:647px">3626477013</div>
<div class="td" style="left:930px;top:647px;letter-spacing:0.23px">2.11.2021</div>
<div class="td" style="left:1136px;top:647px">-</div>
<div class="td" style="left:1325px;top:647px;letter-spacing:-0.05px">44,5 TL</div>
<svg class="abs" style="left:1450px;top:649px" width="10" height="10" viewBox="0 0 10 10"><rect width="10" height="10" rx="1.5" fill="#2a7bd3"/><rect x="2" y="2.3" width="6" height="1.3" fill="#dcecfb"/><rect x="2" y="4.4" width="6" height="1.3" fill="#dcecfb"/><rect x="2" y="6.5" width="6" height="1.3" fill="#dcecfb"/></svg>
<div class="abs" style="left:919px;top:674px;width:1px;height:40px;background:#f1f1f4"></div>
<div class="abs" style="left:1124px;top:674px;width:1px;height:40px;background:#f1f1f4"></div>
<div class="abs" style="left:1314px;top:674px;width:1px;height:40px;background:#f1f1f4"></div>
<div class="abs" style="left:1439px;top:674px;width:1px;height:40px;background:#f1f1f4"></div>
<div class="td" style="left:745px;top:687px">3595698072</div>
<div class="td" style="left:930px;top:687px;letter-spacing:0.23px">4.10.2021</div>
<div class="td" style="left:1136px;top:687px">-</div>
<div class="td" style="left:1325px;top:687px;letter-spacing:-0.05px">43,5 TL</div>
<svg class="abs" style="left:1450px;top:689px" width="10" height="10" viewBox="0 0 10 10"><rect width="10" height="10" rx="1.5" fill="#2a7bd3"/><rect x="2" y="2.3" width="6" height="1.3" fill="#dcecfb"/><rect x="2" y="4.4" width="6" height="1.3" fill="#dcecfb"/><rect x="2" y="6.5" width="6" height="1.3" fill="#dcecfb"/></svg>
<div class="abs" style="left:736px;top:714px;width:856px;height:40px;background:#f2f2f9"></div>
<div class="abs" style="left:919px;top:714px;width:1px;height:40px;background:#fafafc"></div>
<div class="abs" style="left:1124px;top:714px;width:1px;height:40px;background:#fafafc"></div>
<div class="abs" style="left:1314px;top:714px;width:1px;height:40px;background:#fafafc"></div>
<div class="abs" style="left:1439px;top:714px;width:1px;height:40px;background:#fafafc"></div>
<div class="td" style="left:745px;top:727px">3563141296</div>
<div class="td" style="left:930px;top:727px;letter-spacing:0.23px">3.09.2021</div>
<div class="td" style="left:1136px;top:727px">-</div>
<div class="td" style="left:1325px;top:727px;letter-spacing:-0.05px">44,5 TL</div>
<svg class="abs" style="left:1450px;top:729px" width="10" height="10" viewBox="0 0 10 10"><rect width="10" height="10" rx="1.5" fill="#2a7bd3"/><rect x="2" y="2.3" width="6" height="1.3" fill="#dcecfb"/><rect x="2" y="4.4" width="6" height="1.3" fill="#dcecfb"/><rect x="2" y="6.5" width="6" height="1.3" fill="#dcecfb"/></svg>
<div class="abs" style="left:919px;top:754px;width:1px;height:40px;background:#f1f1f4"></div>
<div class="abs" style="left:1124px;top:754px;width:1px;height:40px;background:#f1f1f4"></div>
<div class="abs" style="left:1314px;top:754px;width:1px;height:40px;background:#f1f1f4"></div>
<div class="abs" style="left:1439px;top:754px;width:1px;height:40px;background:#f1f1f4"></div>
<div class="td" style="left:745px;top:767px">3530281484</div>
<div class="td" style="left:930px;top:767px;letter-spacing:0.23px">4.08.2021</div>
<div class="td" style="left:1136px;top:767px">-</div>
<div class="td" style="left:1325px;top:767px;letter-spacing:-0.05px">29,5 TL</div>
<svg class="abs" style="left:1450px;top:769px" width="10" height="10" viewBox="0 0 10 10"><rect width="10" height="10" rx="1.5" fill="#2a7bd3"/><rect x="2" y="2.3" width="6" height="1.3" fill="#dcecfb"/><rect x="2" y="4.4" width="6" height="1.3" fill="#dcecfb"/><rect x="2" y="6.5" width="6" height="1.3" fill="#dcecfb"/></svg>
</body></html>
